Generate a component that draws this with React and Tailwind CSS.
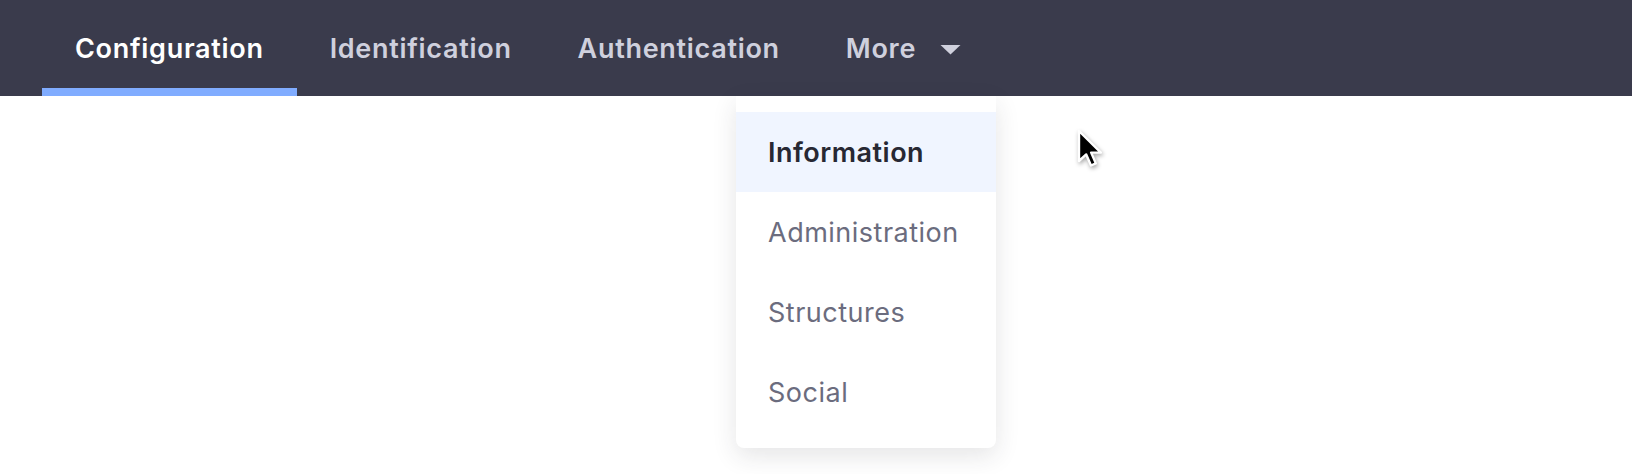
import { useState } from "react";

const tabs = ["Configuration", "Identification", "Authentication"];
const menuItems = ["Information", "Administration", "Structures", "Social"];

function Caret() {
  return (
    <svg width="21" height="11" viewBox="0 0 21 11" className="ml-[24px]">
      <path d="M0.5 1 H20.5 L10.5 10.5 Z" fill="#cfd0dd" />
    </svg>
  );
}

function Cursor() {
  return (
    <svg
      width="30"
      height="42"
      viewBox="0 0 20 28"
      className="absolute left-[1076px] top-[128px] drop-shadow-[1px_2px_2px_rgba(0,0,0,0.35)]"
    >
      <path
        d="M2 2 L2 22 L6.8 17.6 L10 25 L13.2 23.6 L10.1 16.4 L16.6 16.4 Z"
        fill="#000"
        stroke="#fff"
        strokeWidth="1.6"
        strokeLinejoin="round"
      />
    </svg>
  );
}

export default function App() {
  const [active, setActive] = useState(0);
  const [hovered, setHovered] = useState(0);

  return (
    <div className="relative w-full h-[474px] bg-white overflow-hidden font-['Inter','Noto_Sans',sans-serif]">
      <nav className="h-[96px] bg-[#3a3b4c] flex pl-[42px]">
        {tabs.map((tab, i) => (
          <button
            key={tab}
            onClick={() => setActive(i)}
            className={`relative h-full flex items-center px-[33px] pt-[2px] text-[27px] font-semibold tracking-[0.7px] ${
              active === i ? "text-white" : "text-[#cfd0dd]"
            }`}
          >
            {tab}
            {active === i && (
              <span className="absolute left-0 right-0 bottom-0 h-2 bg-[#80acff]" />
            )}
          </button>
        ))}
        <button className="h-full flex items-center px-[33px] pt-[2px] text-[27px] font-semibold tracking-[0.7px] text-[#cfd0dd]">
          More
          <Caret />
        </button>
      </nav>

      <div className="absolute left-[736px] top-[96px] w-[260px] bg-white rounded-b-lg py-4 shadow-[0_8px_24px_rgba(39,40,51,0.12)]">
        {menuItems.map((item, i) => (
          <div
            key={item}
            onMouseEnter={() => setHovered(i)}
            className={`h-20 flex items-center px-[32px] pt-[2px] text-[27px] tracking-[0.5px] ${
              hovered === i
                ? "bg-[#f0f5ff] text-[#272833] font-semibold"
                : "text-[#6b6c7e]"
            }`}
          >
            {item}
          </div>
        ))}
      </div>

      <Cursor />
    </div>
  );
}
